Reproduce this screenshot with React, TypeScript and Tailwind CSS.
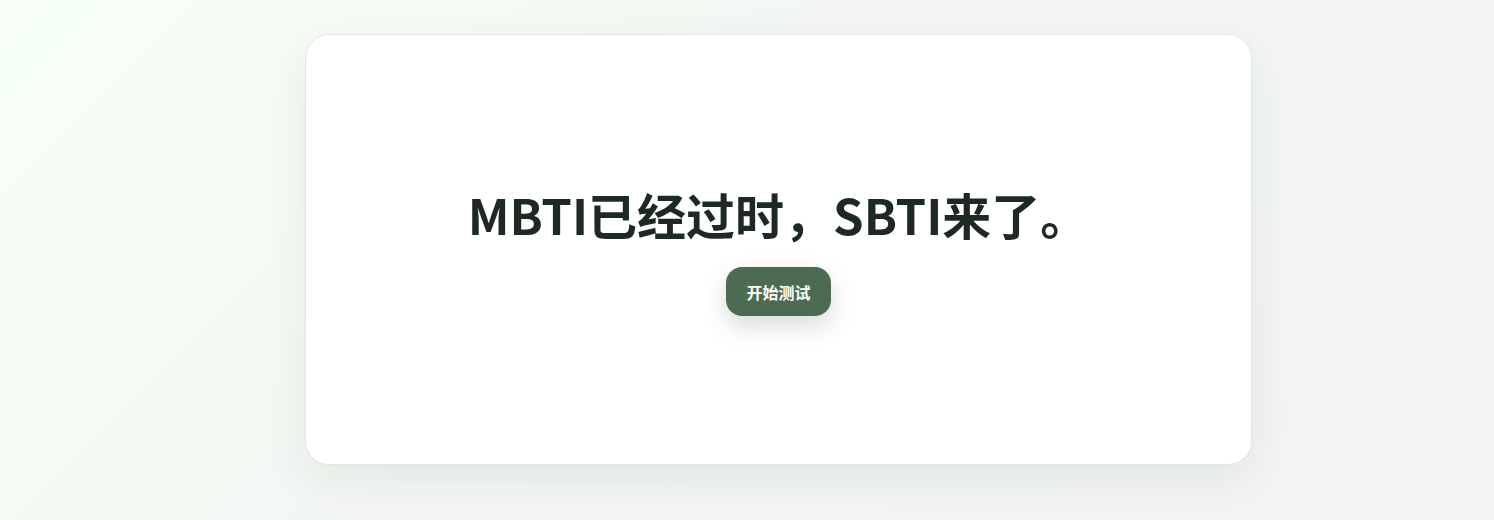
export default function App() {
  return (
    <div className="min-h-[520px] w-full bg-[linear-gradient(135deg,#f6fff6_0%,#f3f6f3_45%,#f2f4f2_100%)] pt-[34px] font-['Noto_Sans_CJK_SC','Noto_Sans',sans-serif]">
      <div className="ml-[305px] flex h-[431px] w-[947px] flex-col items-center justify-center rounded-[24px] border border-[#e2e7e2] bg-white shadow-[0_14px_40px_rgba(40,60,45,0.08)]">
        <h1 className="text-[49px] font-bold leading-tight text-[#1d2921]">
          MBTI已经过时，SBTI来了。
        </h1>
        <button className="mt-[23px] h-[49px] rounded-[16px] bg-[#4d6a52] px-[20px] text-[16px] font-bold text-white shadow-[0_10px_24px_rgba(40,60,45,0.18)]">
          开始测试
        </button>
      </div>
    </div>
  );
}
